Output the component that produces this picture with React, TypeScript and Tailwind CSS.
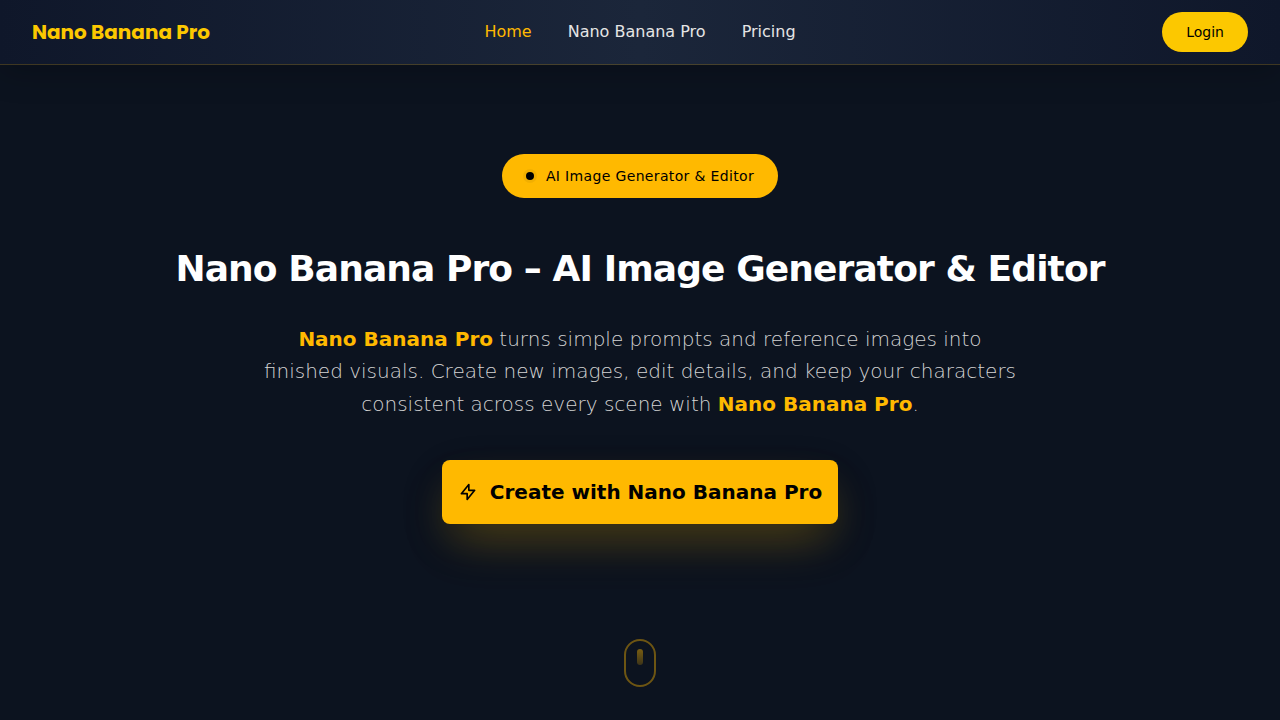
const links = [
  { label: "Home", href: "#home", active: true },
  { label: "Nano Banana Pro", href: "#nano-banana-pro", active: false },
  { label: "Pricing", href: "#pricing", active: false },
];

function Bolt() {
  return (
    <svg
      className="size-5"
      viewBox="0 0 24 24"
      fill="none"
      stroke="currentColor"
      strokeWidth="2"
      strokeLinecap="round"
      strokeLinejoin="round"
      aria-hidden="true"
    >
      <path d="M13 10V3L4 14h7v7l9-11h-7z" />
    </svg>
  );
}

function Header() {
  return (
    <header className="relative z-10 border-b border-[#ffb900]/20 bg-linear-to-r from-[#0f172a] via-[#1b263a] to-[#0f172a] shadow-[0_8px_32px_rgb(0_0_0/0.2)]">
      <div className="grid h-16 grid-cols-[1fr_auto_1fr] items-center px-8">
        <a
          href="#home"
          className="justify-self-start font-['Poppins','Inter',sans-serif] text-xl font-bold text-[#fcc800]"
        >
          Nano Banana Pro
        </a>
        <nav className="flex items-center gap-9">
          {links.map((link) => (
            <a
              key={link.label}
              href={link.href}
              className={link.active ? "text-[#ffb900]" : "text-neutral-200"}
            >
              {link.label}
            </a>
          ))}
        </nav>
        <button
          type="button"
          className="h-10 justify-self-end rounded-full bg-[#fcc800] px-6 text-sm text-black"
        >
          Login
        </button>
      </div>
    </header>
  );
}

function Hero() {
  return (
    <main className="relative flex flex-1 flex-col items-center justify-center px-6 pb-[107px] text-center">
      <div className="flex items-center gap-3 rounded-full bg-[#ffb900] px-6 py-3 text-sm tracking-wide text-black">
        <span className="size-2 rounded-full bg-black ring-3 ring-black/5" />
        AI Image Generator &amp; Editor
      </div>
      <h1 className="mt-12 text-4xl leading-tight font-bold tracking-tight text-white">
        Nano Banana Pro – AI Image Generator &amp; Editor
      </h1>
      <p className="mt-8 max-w-3xl text-xl leading-relaxed font-extralight text-neutral-300">
        <strong className="font-bold text-[#ffb900]">Nano Banana Pro</strong> turns simple prompts
        and reference images into finished visuals. Create new images, edit details, and keep your
        characters consistent across every scene with{" "}
        <strong className="font-bold text-[#ffb900]">Nano Banana Pro</strong>.
      </p>
      <button
        type="button"
        className="mt-10 flex h-16 items-center gap-3 rounded-lg bg-[#ffb900] px-4 text-xl font-bold text-black shadow-[0_25px_50px_-12px_rgb(255_185_0/0.25),0_16px_48px_rgb(0_0_0/0.1),0_16px_40px_-4px_rgb(255_185_0/0.08)]"
      >
        <Bolt />
        Create with Nano Banana Pro
      </button>
      <div className="absolute bottom-[33px] left-1/2 flex h-12 w-8 -translate-x-1/2 justify-center rounded-full border-2 border-[#ffb900]/40 pt-2">
        <span className="h-4 w-1.5 rounded-full bg-linear-to-b from-[#ffb900]/45 to-[#ffb900]/20" />
      </div>
    </main>
  );
}

export default function App() {
  return (
    <div className="flex min-h-screen flex-col bg-[#0c131f] font-['DejaVu_Sans',sans-serif]">
      <Header />
      <Hero />
    </div>
  );
}
